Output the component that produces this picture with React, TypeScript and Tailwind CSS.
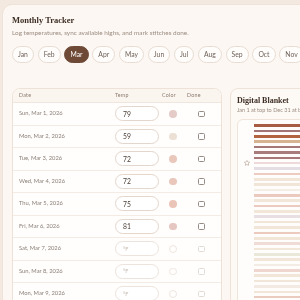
import { Star } from "lucide-react";

const months = ["Jan", "Feb", "Mar", "Apr", "May", "Jun", "Jul", "Aug", "Sep", "Oct", "Nov", "Dec"];

type Day = { label: string; temp?: number; color?: string };

const days: Day[] = [
  { label: "Sun, Mar 1, 2026", temp: 79, color: "#e4cbc8" },
  { label: "Mon, Mar 2, 2026", temp: 59, color: "#ecdfd4" },
  { label: "Tue, Mar 3, 2026", temp: 72, color: "#e9c8bb" },
  { label: "Wed, Mar 4, 2026", temp: 72, color: "#e9c8bb" },
  { label: "Thu, Mar 5, 2026", temp: 75, color: "#ebc4b8" },
  { label: "Fri, Mar 6, 2026", temp: 81, color: "#e6c6c1" },
  { label: "Sat, Mar 7, 2026" },
  { label: "Sun, Mar 8, 2026" },
  { label: "Mon, Mar 9, 2026" },
  { label: "Tue, Mar 10, 2026" },
];

// one stripe per day, Jan 1 at top
const stripes = [
  "#a85c44", "#a57575", "#b2633f", "#d6b491", "#a67777", "#a97c7c", "#a87777",
  "#eedada", "#e4dde3", "#edcbc0", "#f2e6d8", "#f1e5d8", "#f5eee4", "#eccabd",
  "#f2e6d8", "#eccabd", "#f2e6d8", "#e8dfe3", "#f2e6d8", "#f2e6d8", "#eccabd",
  "#f2e6d8", "#f0dcd6", "#f2e6d8", "#e9e8d9", "#f2e6d8", "#f3ece4", "#efd7d0",
  "#f2e6d8", "#f2e6d8", "#f3ebe3", "#f2e6d8", "#ebcbc0", "#f2e6d8",
];

export default function App() {
  return (
    <div className="w-[300px] h-[300px] overflow-hidden bg-[#f3e9e0] pt-[4px] pl-[2px] antialiased will-change-transform font-['Lato','Liberation_Sans',sans-serif]">
      <div className="w-[440px] h-[320px] rounded-tl-[10px] border border-[#efe3d9] bg-[#fcf7f2] pl-[9px] pt-[9px]">
        <h1 className="text-[8.5px] leading-[12px] font-bold text-[#3d2e25] font-['Liberation_Serif',serif]">
          Monthly Tracker
        </h1>
        <p className="mt-[2px] text-[6.4px] leading-[10px] text-[#9b8c82]">
          Log temperatures, sync available highs, and mark stitches done.
        </p>

        <div className="mt-[8px] flex gap-[3.8px]">
          {months.map((m) => (
            <div
              key={m}
              className={
                m === "Mar"
                  ? "h-[17px] px-[5px] rounded-full flex items-center text-[6.8px] bg-[#6e4a36] text-white border border-[#6e4a36]"
                  : "h-[17px] px-[5px] rounded-full flex items-center text-[6.8px] bg-[#fffdfb] text-[#6f625a] border border-[#e8dcd2]"
              }
            >
              {m}
            </div>
          ))}
        </div>

        <div className="mt-[25px] flex items-start gap-[8px]">
          <div className="w-[210px] shrink-0 rounded-[8px] border border-[#eee2d8] bg-[#fffefd] overflow-hidden">
            <div className="h-[14px] grid grid-cols-[96px_47px_25px_1fr] items-center pl-[6px] bg-[#fbf5ef] border-b border-[#f0e6de] text-[5.3px] tracking-[0.05em] text-[#8a7b71]">
              <span>Date</span>
              <span>Temp</span>
              <span>Color</span>
              <span>Done</span>
            </div>
            {days.map((d) => (
              <div
                key={d.label}
                className="h-[22.5px] grid grid-cols-[96px_47px_25px_1fr] items-center pl-[6px] border-b border-[#f3ebe4]"
              >
                <span className="text-[5.8px] text-[#8b7f77]">{d.label}</span>
                <div
                  className={
                    d.temp
                      ? "w-[44px] h-[15px] rounded-full border border-[#e3d6cc] bg-white flex items-center pl-[7px] text-[6.8px] text-[#4a3d35]"
                      : "w-[44px] h-[15px] rounded-full border border-[#ece3dc] bg-white flex items-center pl-[7px] text-[5.5px] text-[#c4b8ae]"
                  }
                >
                  {d.temp ?? "°F"}
                </div>
                <div className="pl-[7px]">
                  {d.color ? (
                    <div className="w-[7.5px] h-[7.5px] rounded-full" style={{ backgroundColor: d.color }} />
                  ) : (
                    <div className="w-[7.5px] h-[7.5px] rounded-full border border-[#eee6e0]" />
                  )}
                </div>
                <div className="pl-[11px]">
                  <div
                    className={
                      d.temp
                        ? "w-[6.5px] h-[6.5px] rounded-[1.5px] border border-[#968c85] bg-white"
                        : "w-[6.5px] h-[6.5px] rounded-[1.5px] border border-[#e2dbd5] bg-white"
                    }
                  />
                </div>
              </div>
            ))}
          </div>

          <div className="w-[200px] shrink-0 rounded-[8px] border border-[#efe3d9] bg-[#fdf9f5] pl-[6px] pt-[6px] h-[240px]">
            <h2 className="text-[8px] leading-[11px] font-bold text-[#3d2e25] font-['Liberation_Serif',serif]">
              Digital Blanket
            </h2>
            <p className="text-[5.5px] leading-[8px] text-[#9b8c82] whitespace-nowrap">
              Jan 1 at top to Dec 31 at bottom.
            </p>
            <div className="mt-[5px] h-[220px] rounded-[6px] border border-[#efe4da] bg-[#fffdfb] pl-[3px] pt-[3px]">
              {stripes.map((c, i) => (
                <div key={i} className="h-[5.36px] flex items-center">
                  <div className="w-[12px] flex justify-center">
                    {i === 7 && <Star size={6} strokeWidth={2} color="#9a8373" />}
                  </div>
                  <div className="ml-[1px] flex-1 h-[2.6px]" style={{ backgroundColor: c }} />
                </div>
              ))}
            </div>
          </div>
        </div>
      </div>
    </div>
  );
}
